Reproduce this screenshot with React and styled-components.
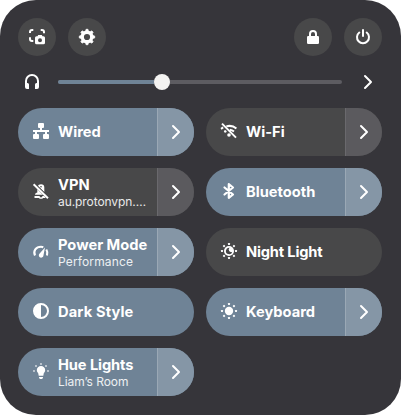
import React from "react";
import styled, { createGlobalStyle } from "styled-components";

const GlobalStyle = createGlobalStyle`
  * { box-sizing: border-box; }
  body { margin: 0; background: #fff; overflow: hidden; }
`;

const Panel = styled.main`
  width: 401px;
  height: 415px;
  padding: 18px 19px 0 18px;
  border-radius: 36px;
  background: #36353a;
  color: #fff;
  font-family: Inter, "Noto Sans", sans-serif;
`;

const Toolbar = styled.header`
  display: flex;
  justify-content: space-between;
`;

const ButtonGroup = styled.div`
  display: flex;
  gap: 12px;
`;

const button = `
  display: flex;
  align-items: center;
  justify-content: center;
  padding: 0;
  border: 0;
  color: inherit;
  font: inherit;
`;

const RoundButton = styled.button`
  ${button}
  width: 38px;
  height: 38px;
  border-radius: 50%;
  background: #484849;
`;

const PlainButton = styled.button`
  ${button}
  width: 16px;
  height: 16px;
  background: none;
`;

const VolumeRow = styled.div`
  display: flex;
  align-items: center;
  height: 52px;
  padding: 0 6px;
`;

const Track = styled.div`
  display: flex;
  align-items: center;
  width: 284px;
  height: 4px;
  margin: 0 18px;
  border-radius: 2px;
  background: #5d5c61;
`;

const Fill = styled.div`
  width: 96px;
  height: 4px;
  border-radius: 2px 0 0 2px;
  background: #6f8396;
`;

const Handle = styled.div`
  width: 16px;
  height: 16px;
  border-radius: 50%;
  background: #f4f3f1;
`;

const TileGrid = styled.section`
  display: grid;
  grid-template-columns: 176px 176px;
  grid-auto-rows: 48px;
  gap: 12px;
`;

const Tile = styled.div`
  display: flex;
  overflow: hidden;
  border-radius: 24px;
  background: ${(p) => (p.$active ? "#6f8396" : "#484849")};
`;

const Toggle = styled.button`
  ${button}
  flex: 1;
  min-width: 0;
  justify-content: flex-start;
  gap: 9px;
  padding-left: 15px;
  background: none;
  text-align: left;
`;

const TileIcon = styled.span`
  display: flex;
  flex: none;
  margin-bottom: 2px;
`;

const Labels = styled.span`
  display: flex;
  flex-direction: column;
  padding-top: ${(p) => (p.$double ? "2px" : "0")};
`;

const Title = styled.span`
  font-size: 14.67px;
  font-weight: 700;
  line-height: 18px;
  letter-spacing: ${(p) => p.$tracking || 0}px;
  white-space: nowrap;
`;

const Subtitle = styled.span`
  color: ${(p) => (p.$active ? "#edf0f2" : "#eaeaea")};
  font-size: 12px;
  line-height: 16px;
  letter-spacing: ${(p) => p.$tracking || 0}px;
  white-space: nowrap;
`;

const MenuButton = styled.button`
  ${button}
  width: 37px;
  border-left: 1px solid ${(p) => (p.$active ? "#9aa8b5" : "#6a696d")};
  background: ${(p) => (p.$active ? "#8596a6" : "#5b5a5e")};
`;

const Svg = styled.svg`
  display: block;
  flex: none;
  width: 16px;
  height: 16px;
  overflow: visible;
  fill: ${(p) => (p.$line ? "none" : "currentColor")};
  stroke: ${(p) => (p.$line ? "currentColor" : "none")};
  stroke-width: 2;
`;

const Icon = ({ line, children }) => (
  <Svg viewBox="0 0 16 16" $line={line} aria-hidden="true">{children}</Svg>
);

const Chevron = () => (
  <Icon line><path d="M5 2l6 6-6 6" strokeLinecap="round" strokeLinejoin="round" /></Icon>
);

const Camera = () => (
  <Icon>
    <path d="M1 4V3q0-2 2-2h1.300M11.700 1H13q2 0 2 2v1.300M1 8.300V10q0 2 2 2h1.300" fill="none" stroke="currentColor" strokeWidth="2" />
    <path fillRule="evenodd" d="M9.200 6h3.600l.7 1.300h1q1.500 0 1.500 1.500v5q0 1.500-1.500 1.500h-7Q6 15.300 6 13.800v-5q0-1.500 1.500-1.500h1zM11 9.300a2 2 0 1 0 0 4 2 2 0 1 0 0-4z" />
  </Icon>
);

const Gear = () => (
  <Icon line>
    <circle cx="8" cy="8" r="4.800" strokeWidth="3.400" />
    {[0, 45, 90, 135, 180, 225, 270, 315].map((a) => (
      <path key={a} d="M6.600 2.500L7 .3h2l.4 2.200z" fill="currentColor" strokeWidth=".7" transform={`rotate(${a} 8 8)`} />
    ))}
  </Icon>
);

const Lock = () => (
  <Icon>
    <path d="M5 8V5a3 3 0 0 1 6 0v3" fill="none" stroke="currentColor" strokeWidth="2" />
    <rect x="2" y="7" width="12" height="8" rx="1.200" />
  </Icon>
);

const Power = () => (
  <Icon line>
    <path d="M4.300 3.500a6 6 0 1 0 7.400 0" strokeLinecap="round" />
    <path d="M8 1v6" strokeLinecap="round" />
  </Icon>
);

const Headphones = () => (
  <Icon>
    <path d="M2 11V7a6 6 0 0 1 12 0v4" fill="none" stroke="currentColor" strokeWidth="2" />
    <path d="M1 9h2.500Q5 9 5 10.500V15H3Q1 15 1 13zM15 9h-2.500Q11 9 11 10.500V15h2q2 0 2-2z" />
  </Icon>
);

const Wired = () => (
  <Icon>
    <rect x="5" y="0" width="6" height="5" rx="1" />
    <rect x="0" y="11" width="6" height="5" rx="1" />
    <rect x="10" y="11" width="6" height="5" rx="1" />
    <path d="M7 4h2v3h7v2h-2v3h-2V9H4v3H2V9H0V7h7z" />
  </Icon>
);

const WifiOff = () => (
  <Icon line>
    <path d="M5.300 3.400Q11 1.700 15.400 5.500M0 5.800L2.200 4.400M8.800 6.700q2.500.3 4.200 1.700M3.300 8.800l1.500-1" />
    <path d="M1 .7l14 14" strokeWidth="1.900" />
    <circle cx="8" cy="12" r="1.800" fill="currentColor" stroke="none" />
    <circle cx="4.500" cy="8.500" r="1.100" fill="currentColor" stroke="none" />
  </Icon>
);

const VpnOff = () => (
  <Icon>
    <path d="M4.500 3.500Q5.500 1.300 8 1.300q3.300 0 3.300 3.300V9L5 3zM4.300 5v4.600l-1.300.3q-1 .6-1 1.900h8.500z" />
    <circle cx="8" cy="3.700" r=".8" fill="#484849" />
    <path d="M1.500 13h4.800a2 2 0 0 0 3.400 0h2.800v2H10.300q-2.300 1.700-4.600 0H1.500z" />
    <circle cx="8" cy="13.500" r="1" fill="#484849" />
    <path d="M1 1l14 14" fill="none" stroke="#484849" strokeWidth="2.700" />
    <path d="M.6 1.300l14.400 14" fill="none" stroke="currentColor" strokeWidth="1.900" />
  </Icon>
);

const Bluetooth = () => (
  <Icon line><path d="M3.500 4.500l8.500 7-4.200 3.300V1.200L12 4.500l-8.500 7" strokeWidth="2.200" strokeLinejoin="round" strokeLinecap="round" /></Icon>
);

const Gauge = () => (
  <Icon>
    <path d="M2 12.500C-.2 8 3 3.800 8 3.800q1.300 0 2.300.4M13.300 6.500q1.800 2.700.7 6" fill="none" stroke="currentColor" strokeWidth="2.100" />
    <path d="M12 4.500l-1.600 8.200a2.300 2.300 0 1 1-4.200-1.600z" />
  </Icon>
);

const rays = () =>
  [0, 45, 90, 135, 180, 225, 270, 315].map((a) => (
    <rect key={a} x="7" y="0" width="2" height="2" rx=".4" transform={`rotate(${a} 8 8)`} />
  ));

const NightLight = () => (
  <Icon>
    {rays()}
    <circle cx="8" cy="8" r="5" />
    <path d="M8.500 4.800a3.200 3.200 0 1 0 2.700 3.900A2.400 2.400 0 0 1 8.500 4.800z" fill="#484849" />
  </Icon>
);

const Brightness = () => (
  <Icon>{rays()}<circle cx="8" cy="8" r="4.200" /></Icon>
);

const Contrast = () => (
  <Icon>
    <circle cx="8" cy="8" r="7" fill="none" stroke="currentColor" strokeWidth="2" />
    <path d="M8 1a7 7 0 0 0 0 14z" />
  </Icon>
);

const Bulb = () => (
  <Icon>
    <path d="M8 3a4.200 4.200 0 0 1 4.200 4.200q0 1.600-1.400 3l-.5 2.600H5.700l-.5-2.600q-1.400-1.400-1.400-3A4.200 4.200 0 0 1 8 3zM6 14h4v.6q0 1.400-1.400 1.400H7.400Q6 16 6 14.600z" />
    <g opacity=".75">
      <circle cx="8" cy="1" r=".9" /><circle cx="3" cy="3" r=".9" /><circle cx="13" cy="3" r=".9" />
      <circle cx="1" cy="8" r=".9" /><circle cx="15" cy="8" r=".9" />
    </g>
  </Icon>
);

const tiles = [
  { title: "Wired", icon: Wired, active: true, menu: true },
  { title: "Wi-Fi", icon: WifiOff, menu: true },
  { title: "VPN", subtitle: "au.protonvpn.…", subTracking: -0.08, icon: VpnOff, menu: true },
  { title: "Bluetooth", icon: Bluetooth, active: true, menu: true },
  { title: "Power Mode", subtitle: "Performance", subTracking: 0.15, icon: Gauge, active: true, menu: true },
  { title: "Night Light", tracking: -0.18, icon: NightLight },
  { title: "Dark Style", tracking: 0.13, icon: Contrast, active: true },
  { title: "Keyboard", icon: Brightness, active: true, menu: true },
  { title: "Hue Lights", tracking: -0.1, subtitle: "Liam’s Room", subTracking: -0.06, icon: Bulb, active: true, menu: true },
];

export default function App() {
  return (
    <>
      <GlobalStyle />
      <Panel>
        <Toolbar>
          <ButtonGroup>
            <RoundButton aria-label="Screenshot"><Camera /></RoundButton>
            <RoundButton aria-label="Settings"><Gear /></RoundButton>
          </ButtonGroup>
          <ButtonGroup>
            <RoundButton aria-label="Lock"><Lock /></RoundButton>
            <RoundButton aria-label="Power"><Power /></RoundButton>
          </ButtonGroup>
        </Toolbar>
        <VolumeRow>
          <Headphones />
          <Track><Fill /><Handle /></Track>
          <PlainButton aria-label="Sound output"><Chevron /></PlainButton>
        </VolumeRow>
        <TileGrid>
          {tiles.map(({ title, tracking, subtitle, subTracking, icon: Glyph, active, menu }) => (
            <Tile key={title} $active={active}>
              <Toggle>
                <TileIcon><Glyph /></TileIcon>
                <Labels $double={Boolean(subtitle)}>
                  <Title $tracking={tracking}>{title}</Title>
                  {subtitle && <Subtitle $active={active} $tracking={subTracking}>{subtitle}</Subtitle>}
                </Labels>
              </Toggle>
              {menu && <MenuButton $active={active} aria-label={`${title} menu`}><Chevron /></MenuButton>}
            </Tile>
          ))}
        </TileGrid>
      </Panel>
    </>
  );
}
